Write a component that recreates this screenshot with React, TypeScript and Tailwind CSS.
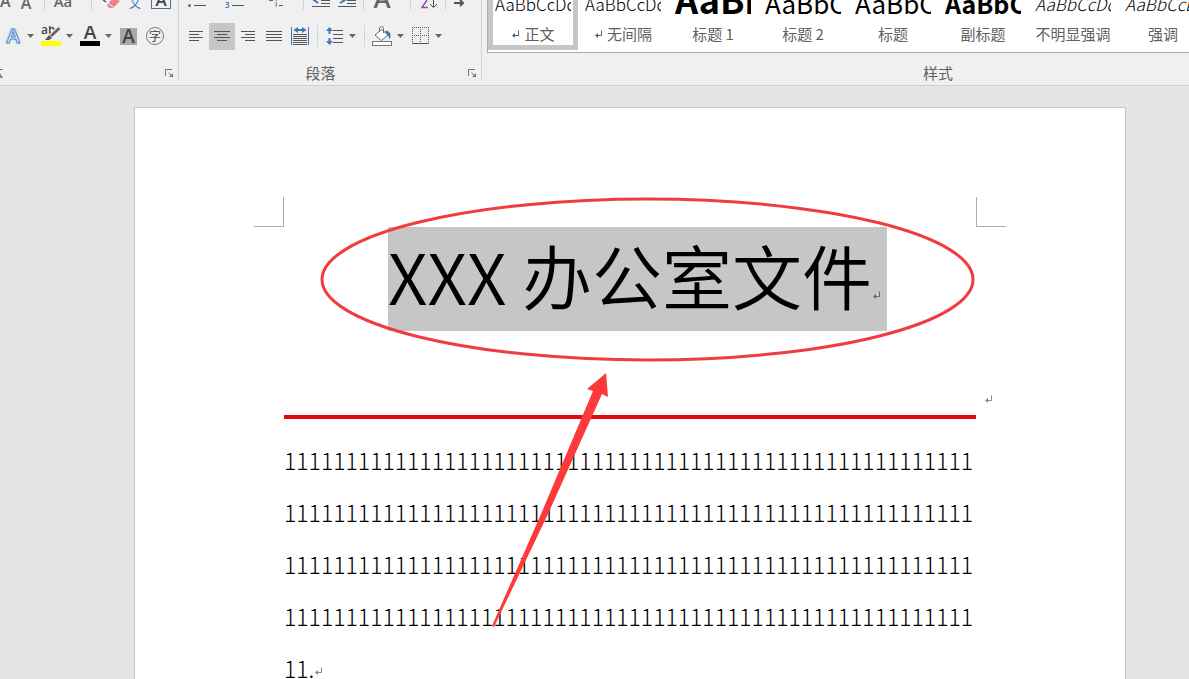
import React from 'react';

const BODY_TEXT = '1'.repeat(226) + '.';

type StyleItem = {
    name: string;
    preview: string;
    className: string;
    mark?: boolean;
    selected?: boolean;
};

const STYLES: StyleItem[] = [
    { name: '正文', preview: 'AaBbCcDd', className: 'text-[17px] leading-[26px] font-light', mark: true, selected: true },
    { name: '无间隔', preview: 'AaBbCcDd', className: 'text-[17px] leading-[26px] font-light', mark: true },
    { name: '标题 1', preview: 'AaBb', className: 'text-[36px] leading-[38px] font-bold' },
    { name: '标题 2', preview: 'AaBbC', className: 'text-[26px] leading-[28px]' },
    { name: '标题', preview: 'AaBbC', className: 'text-[26px] leading-[28px]' },
    { name: '副标题', preview: 'AaBbC', className: 'text-[25px] leading-[28px] font-bold' },
    { name: '不明显强调', preview: 'AaBbCcDd', className: 'text-[17px] leading-[26px] font-light italic text-[#555]' },
    { name: '强调', preview: 'AaBbCcDd', className: 'text-[17px] leading-[26px] font-light italic' },
];

const ReturnMark = ({ className = '' }: { className?: string }) => (
    <svg className={`shrink-0 ${className}`} width="9" height="9" viewBox="0 0 9 9" fill="none" stroke="currentColor">
        <path d="M7.5 0.5V5.5H2" />
        <path d="M4 3L1 5.5L4 8Z" fill="currentColor" stroke="none" />
    </svg>
);

const Caret = ({ label }: { label: string }) => (
    <button aria-label={label} className="flex h-full w-[17px] items-center justify-center">
        <svg width="7" height="4" viewBox="0 0 7 4" fill="#666">
            <path d="M0 0H7L3.5 4Z" />
        </svg>
    </button>
);

const Launcher = ({ label }: { label: string }) => (
    <button aria-label={label} className="flex size-3 items-center justify-center">
        <svg width="9" height="9" viewBox="0 0 9 9" fill="none" stroke="#777">
            <path d="M0.5 7V0.5H7M3.5 3.5L7 7" />
            <path d="M8 4V8H4Z" fill="#777" stroke="none" />
        </svg>
    </button>
);

const Divider = ({ className = '' }: { className?: string }) => (
    <span className={`w-px shrink-0 bg-[#d4d4d4] ${className}`} />
);

const IconButton = ({ label, className = '', children }: { label: string; className?: string; children: React.ReactNode }) => (
    <button aria-label={label} className={`flex shrink-0 items-center justify-center ${className}`}>
        {children}
    </button>
);

// Four text lines, each given as [x1, x2]
const AlignIcon = ({ lines }: { lines: number[][] }) => (
    <svg width="18" height="14" viewBox="0 0 18 14" stroke="#555">
        {lines.map(([a, b], i) => (
            <path key={i} d={`M${a} ${i * 3 + 2.5}H${b}`} />
        ))}
    </svg>
);

const ALIGNMENTS = [
    { label: '左对齐', lines: [[2, 16], [2, 12], [2, 16], [2, 12]] },
    { label: '居中', lines: [[1, 17], [4, 14], [1, 17], [4, 14]], active: true },
    { label: '右对齐', lines: [[2, 16], [6, 16], [2, 16], [6, 16]] },
    { label: '两端对齐', lines: [[1, 17], [1, 17], [1, 17], [1, 17]] },
];

const FontGroup = () => (
    <section className="flex w-[178px] shrink-0 flex-col">
        <div className="flex h-[10px] items-end overflow-hidden font-['Open_Sans',sans-serif] font-semibold text-[#666]">
            <button className="w-5 pr-4 text-center text-[16px] leading-[18px]">A</button>
            <button className="w-3 text-center text-[16px] leading-[14px]">A</button>
            <Divider className="ml-3 h-full" />
            <button className="ml-2 w-[20px] text-[15px] leading-[18px]">Aa</button>
            <Divider className="ml-[18px] h-full" />
            <IconButton label="清除格式" className="ml-2 h-full w-5">
                <svg width="20" height="10" viewBox="0 0 20 10">
                    <path d="M7 5L13 -2L20 1L13 8H9Z" fill="#e8818f" />
                    <path d="M8 3L13 7" stroke="#fff" />
                    <path d="M3 0L6 2" stroke="#555" strokeWidth="1.5" />
                </svg>
            </IconButton>
            <button className="ml-[5px] w-5 font-['Noto_Sans_CJK_SC',sans-serif] text-[12px] font-normal leading-[14px] text-[#3c78b8]">文</button>
            <button className="ml-[6px] mb-px h-5 w-[20px] border border-[#4a6fa5] text-[17px] leading-[20px] text-[#444]">A</button>
        </div>
        <div className="mt-3 flex h-7 items-center gap-0.5 pl-1">
            <div className="flex h-full items-center">
                <button className="w-[18px] font-['Open_Sans',sans-serif] text-[20px] font-semibold leading-6 text-white [-webkit-text-stroke:1px_#4a86c8] [text-shadow:0_0_3px_#8db8e8]">A</button>
                <Caret label="文本效果选项" />
            </div>
            <div className="flex h-full items-center">
                <IconButton label="突出显示" className="h-full w-5">
                    <svg width="20" height="20" viewBox="0 0 20 20">
                        <rect x="0" y="15" width="20" height="5" fill="#ff0" />
                        <text x="0" y="8" fontSize="12" fontFamily="Open Sans" fontWeight="600" fill="#444">ab</text>
                        <path d="M18.500 1.500L9 11" stroke="#f0f0f0" strokeWidth="5" />
                        <path d="M18.500 2L10 10" stroke="#666" strokeWidth="3" />
                        <path d="M8 9L11 12L8 14H4Z" fill="#555" />
                    </svg>
                </IconButton>
                <Caret label="突出显示选项" />
            </div>
            <div className="flex h-full items-center">
                <IconButton label="字体颜色" className="h-full w-5">
                    <svg width="20" height="20" viewBox="0 0 20 20">
                        <rect x="0" y="15" width="20" height="5" fill="#000" />
                        <text x="10" y="13" textAnchor="middle" fontSize="19" fontFamily="Open Sans" fontWeight="600" fill="#444">A</text>
                    </svg>
                </IconButton>
                <Caret label="字体颜色选项" />
            </div>
            <button className="ml-px h-[17px] w-[17px] bg-[#a8a8a8] font-['Open_Sans',sans-serif] text-[19px] font-semibold leading-[17px] text-[#444]">A</button>
            <button className="ml-[7px] size-[18px] rounded-full border border-[#777] text-[12px] leading-[16px] text-[#444]">字</button>
        </div>
        <div className="mt-3 flex h-[22px] items-center justify-between pr-[3px]">
            <span className="flex w-[3px] justify-end overflow-hidden whitespace-nowrap">字体</span>
            <Launcher label="字体设置" />
        </div>
    </section>
);

const ParagraphGroup = () => (
    <section className="flex w-[302px] shrink-0 flex-col">
        <div className="flex h-[10px] items-end overflow-hidden">
            <IconButton label="项目符号" className="ml-2 h-full w-5">
                <svg width="20" height="10" viewBox="0 0 20 10">
                    <circle cx="2.500" cy="5.500" r="1.500" fill="#3f74ad" />
                    <path d="M7 5.500H19" stroke="#555" />
                </svg>
            </IconButton>
            <IconButton label="编号" className="ml-[18px] h-full w-5">
                <svg width="20" height="10" viewBox="0 0 20 10">
                    <text x="0" y="8" fontSize="8" fontFamily="Open Sans" fontWeight="600" fill="#3f74ad">3</text>
                    <path d="M7 5.500H19" stroke="#555" />
                </svg>
            </IconButton>
            <IconButton label="多级列表" className="ml-6 h-full w-5">
                <svg width="20" height="10" viewBox="0 0 20 10">
                    <rect x="0" y="0" width="4" height="1" fill="#3f74ad" />
                    <text x="6" y="7" fontSize="8" fontFamily="Open Sans" fontWeight="600" fill="#3f74ad">i</text>
                    <path d="M10 5.500H14" stroke="#555" />
                </svg>
            </IconButton>
            <Divider className="ml-[14px] h-full" />
            <IconButton label="减少缩进" className="ml-2 h-full w-[18px]">
                <svg width="18" height="10" viewBox="0 0 18 10">
                    <path d="M9 0.500H18M9 3.500H18M0 6.500H18" stroke="#555" />
                    <path d="M5 -2L2 0L6 3" fill="none" stroke="#3f74ad" strokeWidth="2" />
                </svg>
            </IconButton>
            <IconButton label="增加缩进" className="ml-2 h-full w-[18px]">
                <svg width="18" height="10" viewBox="0 0 18 10">
                    <path d="M9 0.500H18M9 3.500H18M0 6.500H18" stroke="#555" />
                    <path d="M5 -3L7 0L2 3" fill="none" stroke="#3f74ad" strokeWidth="2" />
                </svg>
            </IconButton>
            <Divider className="ml-[7px] h-full" />
            <button className="ml-2 w-5 font-['Open_Sans',sans-serif] text-[26px] font-semibold leading-[24px] text-[#666]">A</button>
            <Divider className="ml-[18px] h-full" />
            <IconButton label="排序" className="ml-2 h-full w-5">
                <svg width="20" height="10" viewBox="0 0 20 10" fill="none">
                    <path d="M8 0L3 7.500H9" stroke="#8a4fa8" strokeWidth="1.500" />
                    <path d="M14.500 -1V7M11 4L14.500 7.500L18 4" stroke="#555" />
                </svg>
            </IconButton>
            <Divider className="ml-[6px] h-full" />
            <IconButton label="显示编辑标记" className="ml-2 h-full w-3">
                <svg width="12" height="10" viewBox="0 0 12 10" fill="none" stroke="#555" strokeWidth="2">
                    <path d="M0 3H9M6 0L9 3L6 6" />
                </svg>
            </IconButton>
        </div>
        <div className="mt-3 flex h-7 items-center pl-1">
            {ALIGNMENTS.map(a => (
                <IconButton key={a.label} label={a.label} className={`h-[27px] w-[26px] ${a.active ? 'bg-[#c6c6c6]' : ''}`}>
                    <AlignIcon lines={a.lines} />
                </IconButton>
            ))}
            <IconButton label="分散对齐" className="h-full w-[26px]">
                <svg width="18" height="18" viewBox="0 0 18 18" fill="none">
                    <path d="M0.500 0V18M17.500 0V18" stroke="#3f74ad" />
                    <path d="M4 3H14" stroke="#3f74ad" strokeWidth="2" />
                    <path d="M7 0V6L2.500 3ZM11 0V6L15.500 3Z" fill="#3f74ad" />
                    <path d="M2 7.500H16M2 9.500H16M2 11.500H16M2 13.500H16M2 15.500H16M2 17.500H16" stroke="#555" />
                </svg>
            </IconButton>
            <Divider className="ml-1 h-[22px]" />
            <IconButton label="行距" className="ml-2 h-full w-[18px]">
                <svg width="18" height="20" viewBox="0 0 18 20" fill="none">
                    <path d="M3.500 3V8M3.500 12V17" stroke="#3f78b8" strokeWidth="2" />
                    <path d="M0 5L3.500 1L7 5ZM0 15L3.500 19L7 15Z" fill="#3f78b8" />
                    <path d="M7 4.500H17M7 8.500H17M7 12.500H17M7 16.500H17" stroke="#555" />
                </svg>
            </IconButton>
            <Caret label="行距选项" />
            <Divider className="ml-[3px] h-[22px]" />
            <IconButton label="底纹" className="ml-[7px] h-full w-5">
                <svg width="20" height="20" viewBox="0 0 20 20" fill="none">
                    <rect x="0.500" y="15.500" width="19" height="4" fill="#fff" stroke="#777" />
                    <path d="M9.500 3.500L16 9L9.500 14.500L3 9Z" fill="#fff" stroke="#666" />
                    <path d="M7.500 6V2.500C7.500 0 11.500 0 11.500 2.500V7" stroke="#666" />
                    <path d="M13 5C17 4 20 8 18 13C16.500 12 17 9 14 7Z" fill="#3f74ad" />
                </svg>
            </IconButton>
            <Caret label="底纹选项" />
            <IconButton label="边框" className="ml-[3px] h-full w-[18px]">
                <svg width="18" height="18" viewBox="0 0 18 18" fill="none" stroke="#555">
                    <path d="M0 0.500H17M0 8.500H17M0.500 0V16M8.500 0V16M16.500 0V16" strokeDasharray="1 1" />
                    <path d="M0 16.500H17" />
                </svg>
            </IconButton>
            <Caret label="边框选项" />
        </div>
        <div className="mt-3 flex h-[22px] items-center pr-[3px]">
            <span className="flex-1 pr-1 text-center">段落</span>
            <Launcher label="段落设置" />
        </div>
    </section>
);

const StylesGroup = () => (
    <section className="w-[908px] shrink-0 pl-[5px]">
        <div className="flex h-[53px] border-b border-l border-[#ababab] bg-white">
            {STYLES.map(s => (
                <button
                    key={s.name}
                    className={`flex h-[50px] w-[90px] shrink-0 flex-col border-5 border-t-0 ${s.selected ? 'border-[#c6c6c6]' : 'border-transparent'}`}
                >
                    <span className="flex h-[17px] w-full items-end overflow-hidden px-0.5">
                        <span className={`w-full overflow-hidden whitespace-nowrap text-left text-black ${s.className}`}>{s.preview}</span>
                    </span>
                    <span className="mt-[7px] flex w-full items-center justify-center gap-1 whitespace-nowrap leading-5">
                        {s.mark && <ReturnMark />}
                        {s.name}
                    </span>
                </button>
            ))}
        </div>
        <div className="mt-[9px] pr-px text-center leading-[22px]">样式</div>
    </section>
);

const Ribbon = () => (
    <header className="flex h-[86px] shrink-0 overflow-hidden border-b border-[#d2d2d2] bg-[#f0f0f0] text-[15px] text-[#5f5f5f]">
        <FontGroup />
        <Divider className="h-[81px]" />
        <ParagraphGroup />
        <Divider className="h-[81px]" />
        <StylesGroup />
    </header>
);

// Hand-drawn callout laid over the document
const Annotation = () => (
    <svg className="pointer-events-none absolute left-0 top-0" width="990" height="571" viewBox="135 108 990 571">
        <ellipse cx="647.500" cy="279.500" rx="325.500" ry="80.500" fill="none" stroke="#f03c3c" strokeWidth="3" />
        <path d="M492 626L494 627L548 514L602 394L608 397L606 373L587 389L593 391L541 514Z" fill="#fc3a3a" />
    </svg>
);

const Page = () => (
    <article className="relative flex-1 border border-b-0 border-[#c6c6c6] bg-white pt-[89px] text-black">
        <div className="flex justify-between px-[119px]">
            <span className="size-[30px] border-b border-r border-[#ababab]" />
            <span className="size-[30px] border-b border-l border-[#ababab]" />
        </div>
        <div className="px-[149px]">
            <div className="flex justify-center pl-[15px]">
                <h1 className="flex h-[104px] items-center whitespace-nowrap bg-[#c6c6c6] text-[70px] font-[350] leading-[96px]">
                    <span className="pb-2">XXX 办公室文件</span>
                    <ReturnMark className="mr-1.5 mt-8 text-[#666]" />
                </h1>
            </div>
            <div className="flex justify-end pt-16">
                <ReturnMark className="-mr-[17px] text-[#888]" />
            </div>
            <hr className="mt-[11px] h-1 border-0 bg-[#e00a0f]" />
            <p className="mt-[15px] break-all text-[23px] font-light leading-[52px]">
                {BODY_TEXT}
                <ReturnMark className="inline text-[#888]" />
            </p>
        </div>
        <Annotation />
    </article>
);

export default function App() {
    return (
        <div className="flex h-screen flex-col overflow-hidden bg-[#e5e5e5] font-['Noto_Sans_CJK_SC',sans-serif]">
            <Ribbon />
            <main className="flex min-h-0 flex-1 pl-[134px] pr-[63px] pt-[21px]">
                <Page />
            </main>
        </div>
    );
}
